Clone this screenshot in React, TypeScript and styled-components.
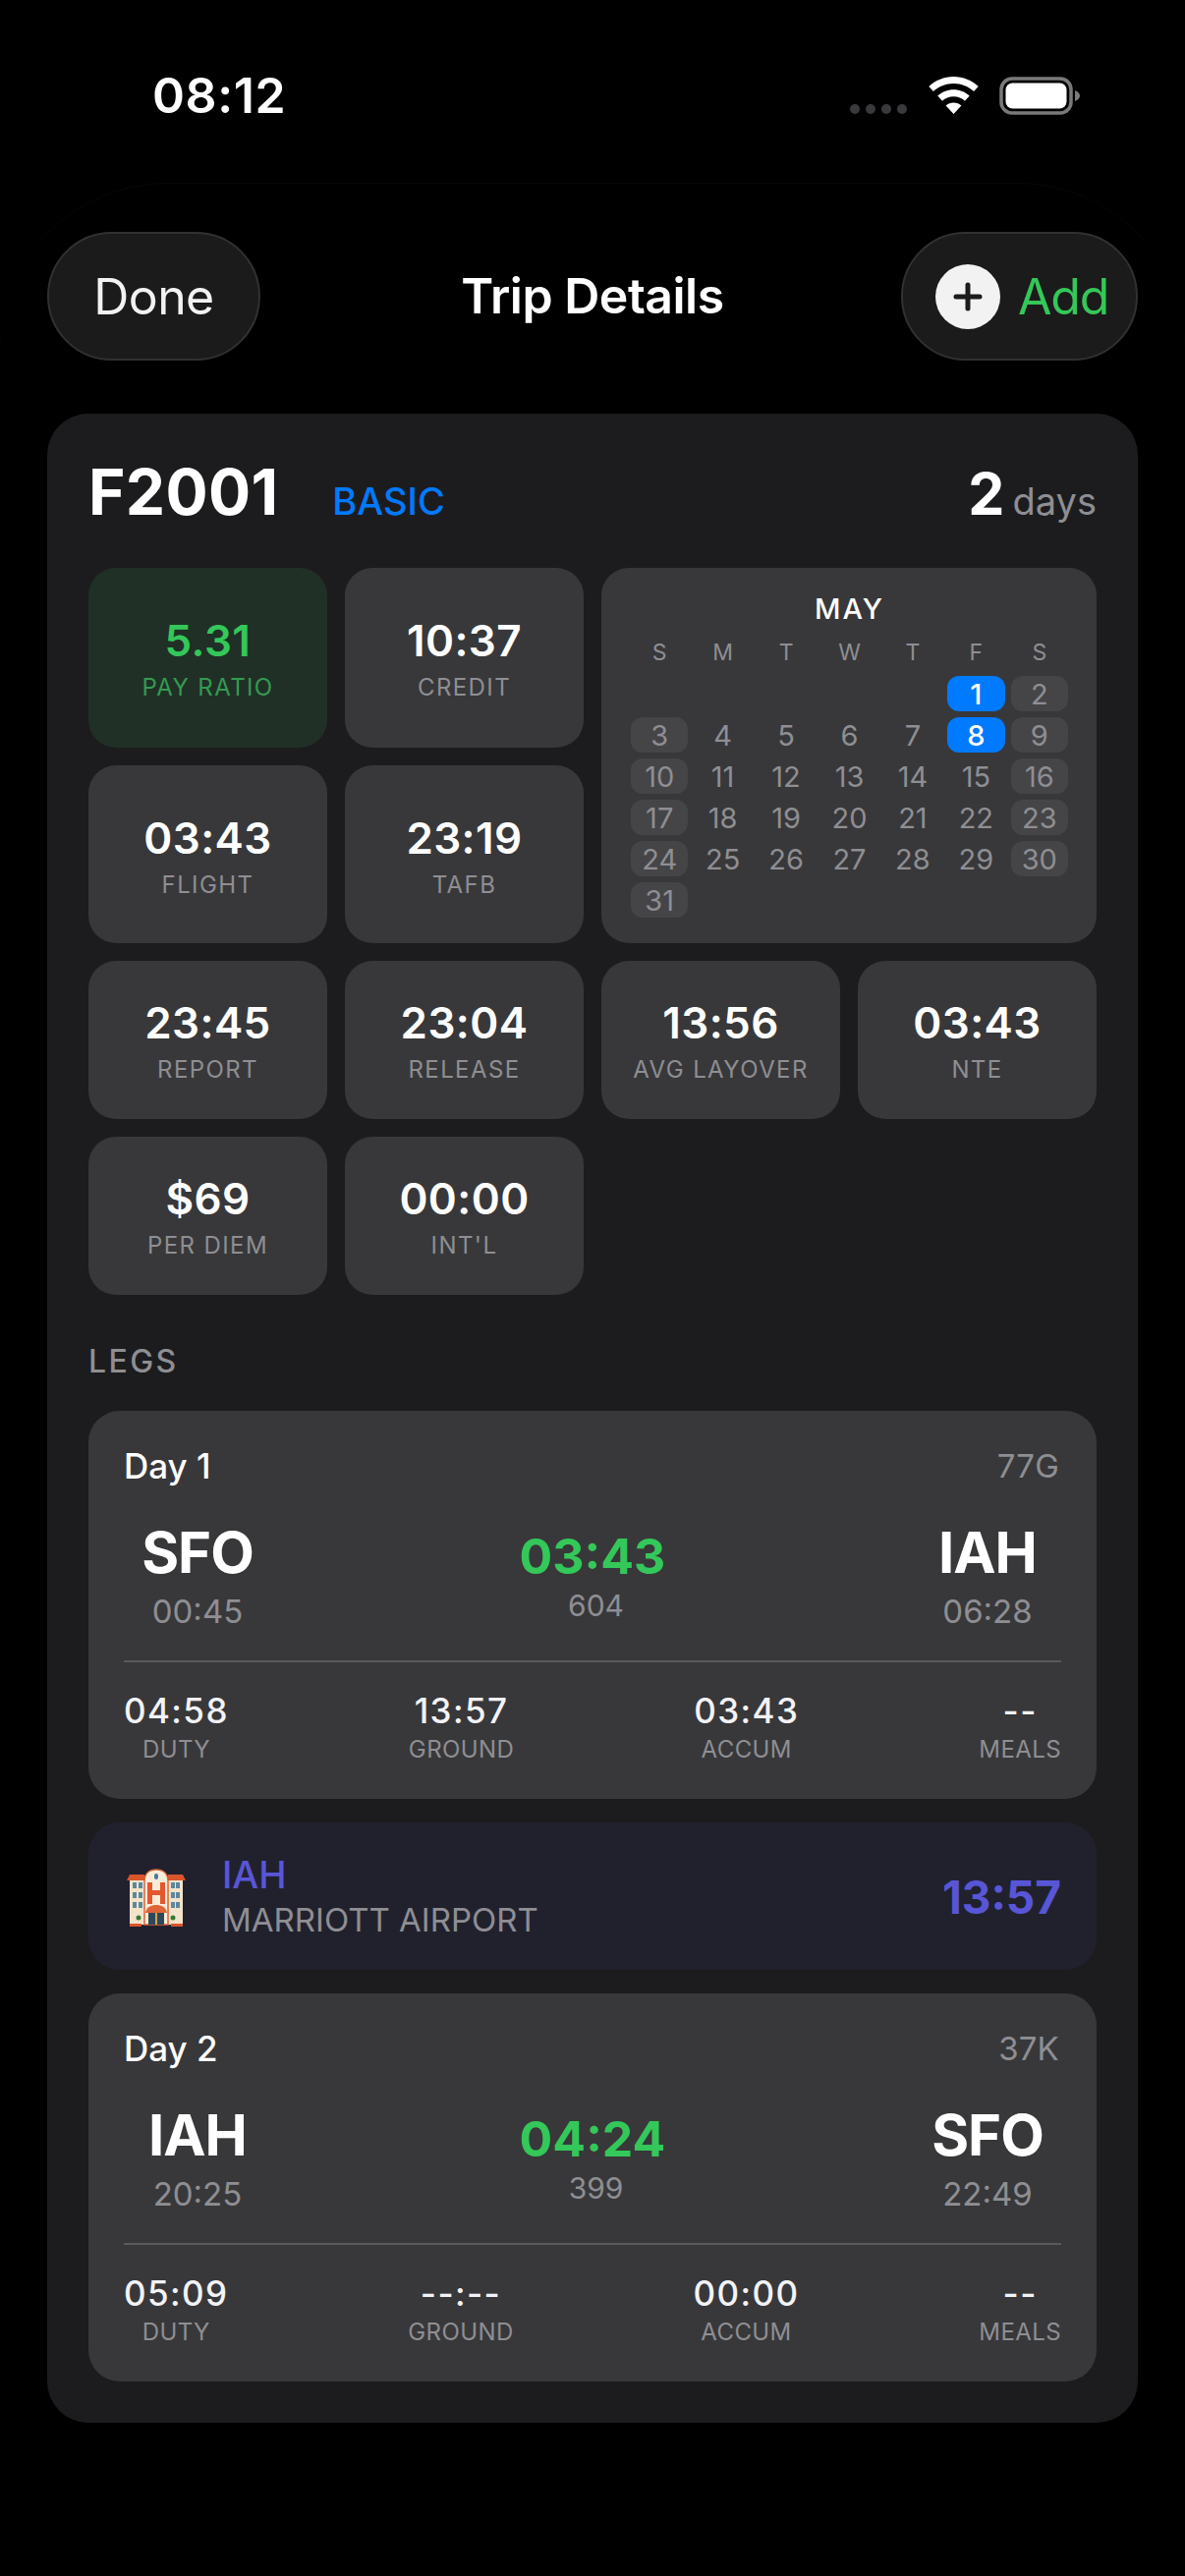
import React from "react";
import styled, { createGlobalStyle } from "styled-components";

const Global = createGlobalStyle`
  html, body { margin: 0; padding: 0; background: #000; }
  * { box-sizing: border-box; }
  body { font-family: Inter, "Liberation Sans", sans-serif; color: #fff; }
`;

const Screen = styled.div`
  width: 1206px;
  height: 2622px;
  overflow: hidden;
  background: #000;
`;

const StatusBar = styled.div`
  height: 186px;
  padding: 72px 106px 0 155px;
  display: flex;
  justify-content: space-between;
  align-items: flex-start;
`;

const Clock = styled.div`
  font-size: 50px;
  line-height: 50px;
  font-weight: 600;
  letter-spacing: 0.6px;
`;

const StatusIcons = styled.div`
  display: flex;
  align-items: flex-start;
  margin-top: 6px;
`;

const SignalDots = styled.div`
  display: flex;
  gap: 6px;
  margin: 28px 22px 0 0;
`;

const SignalDot = styled.span`
  width: 10px;
  height: 10px;
  border-radius: 5px;
  background: #3a3a3c;
`;

const Sheet = styled.div`
  height: 2436px;
  padding: 49px 48px 0;
  border-top: 1px solid #090909;
  border-radius: 170px 170px 0 0;
`;

const NavBar = styled.div`
  height: 131px;
  display: grid;
  grid-template-columns: 241px 1fr 241px;
  align-items: center;
`;

const NavPill = styled.div<{ $align: "start" | "end"; $width: number }>`
  width: ${(p) => p.$width}px;
  height: 131px;
  justify-self: ${(p) => p.$align};
  padding-left: ${(p) => (p.$align === "start" ? "0" : "33px")};
  display: flex;
  align-items: center;
  justify-content: ${(p) => (p.$align === "start" ? "center" : "flex-start")};
  gap: 18px;
  border-radius: 66px;
  background: #1b1b1b;
  border: 2px solid #313133;
  font-size: 50px;
  font-weight: 400;
  color: #f2f2f2;
  letter-spacing: -0.6px;
`;

const AddLabel = styled.span`
  color: #34c759;
  letter-spacing: -1.2px;
`;

const AddCircle = styled.span`
  width: 66px;
  height: 66px;
  border-radius: 50%;
  background: #f2f2f2;
  display: flex;
  align-items: center;
  justify-content: center;
`;

const NavTitle = styled.div`
  padding-bottom: 2px;
  text-align: center;
  font-size: 50px;
  font-weight: 600;
  letter-spacing: -0.5px;
`;

const TripCard = styled.div`
  margin-top: 54px;
  height: 2045px;
  padding: 0 42px;
  background: #1c1c1e;
  border-radius: 42px;
`;

const TripHeader = styled.div`
  height: 157px;
  padding-top: 44px;
  display: flex;
  align-items: baseline;
`;

const TripCode = styled.div`
  font-size: 64px;
  line-height: 72px;
  font-weight: 700;
  letter-spacing: 0.3px;
`;

const TripType = styled.div`
  margin-left: 55px;
  font-size: 38px;
  font-weight: 500;
  color: #007aff;
`;

const DayCount = styled.div`
  margin-left: auto;
  display: flex;
  align-items: baseline;
  gap: 8px;
`;

const DayNumber = styled.span`
  font-size: 59px;
  font-weight: 700;
`;

const DayUnit = styled.span`
  font-size: 38px;
  color: #8e8e93;
`;

const StatGrid = styled.div`
  display: grid;
  grid-template-columns: repeat(4, 243px);
  grid-template-rows: 183px 181px 161px 161px;
  column-gap: 18px;
  row-gap: 18px;
`;

const StatTile = styled.div<{ $green?: boolean; $top: number }>`
  padding-top: ${(p) => p.$top}px;
  display: flex;
  flex-direction: column;
  align-items: center;
  border-radius: 28px;
  background: ${(p) => (p.$green ? "#203026" : "#38383a")};
`;

const StatValue = styled.div<{ $green?: boolean }>`
  font-size: 44px;
  line-height: 52px;
  font-weight: 600;
  letter-spacing: 0.4px;
  color: ${(p) => (p.$green ? "#34c759" : "#fff")};
`;

const StatLabel = styled.div<{ $green?: boolean }>`
  margin-top: 7px;
  font-size: 24px;
  line-height: 30px;
  letter-spacing: 1.4px;
  white-space: nowrap;
  color: ${(p) => (p.$green ? "#349a50" : "#8e8e93")};
`;

const Calendar = styled.div`
  grid-column: 3 / 5;
  grid-row: 1 / 3;
  padding: 24px 29px 0 30px;
  border-radius: 28px;
  background: #38383a;
`;

const CalendarMonth = styled.div`
  text-align: center;
  font-size: 29px;
  line-height: 36px;
  font-weight: 500;
  letter-spacing: 2px;
`;

const CalendarGrid = styled.div`
  margin-top: 8px;
  display: grid;
  grid-template-columns: repeat(7, 1fr);
  grid-auto-rows: 36px;
  column-gap: 6px;
  row-gap: 6px;
`;

const WeekDay = styled.div`
  height: 36px;
  margin-bottom: 11px;
  display: flex;
  align-items: center;
  justify-content: center;
  font-size: 23px;
  color: #8e8e93;
`;

const DayCell = styled.div<{ $kind: "plain" | "off" | "trip"; $start?: number }>`
  ${(p) => (p.$start ? `grid-column-start: ${p.$start};` : "")}
  display: flex;
  align-items: center;
  justify-content: center;
  border-radius: 12px;
  font-size: 29px;
  font-weight: ${(p) => (p.$kind === "trip" ? 500 : 400)};
  color: ${(p) => (p.$kind === "trip" ? "#fff" : "#8e8e93")};
  background: ${(p) =>
    p.$kind === "trip" ? "#007aff" : p.$kind === "off" ? "#454547" : "transparent"};
`;

const SectionTitle = styled.div`
  height: 118px;
  padding-top: 50px;
  font-size: 32px;
  line-height: 36px;
  font-weight: 500;
  letter-spacing: 2.4px;
  color: #8e8e93;
`;

const LegList = styled.div`
  display: flex;
  flex-direction: column;
  gap: 24px;
`;

const LegCard = styled.div`
  height: 395px;
  padding: 33px 36px 0;
  border-radius: 32px;
  background: #38383a;
`;

const LegTop = styled.div`
  display: flex;
  justify-content: space-between;
  align-items: center;
  height: 46px;
`;

const LegDay = styled.div`
  font-size: 35px;
  font-weight: 500;
`;

const LegAircraft = styled.div`
  margin-right: 2px;
  font-size: 33px;
  letter-spacing: 0.2px;
  color: #8e8e93;
`;

const Route = styled.div`
  height: 177px;
  padding-top: 33px;
  display: grid;
  grid-template-columns: 150px 1fr 150px;
  border-bottom: 2px solid #5a5a5c;
`;

const RouteEnd = styled.div`
  display: flex;
  flex-direction: column;
  align-items: center;
`;

const Airport = styled.div`
  font-size: 58px;
  line-height: 64px;
  font-weight: 700;
  letter-spacing: -1px;
`;

const RouteTime = styled.div`
  margin-top: 8px;
  font-size: 33px;
  line-height: 40px;
  color: #8e8e93;
`;

const RouteMiddle = styled.div`
  display: flex;
  flex-direction: column;
  align-items: center;
  padding-top: 7px;
`;

const FlightTime = styled.div`
  font-size: 50px;
  line-height: 58px;
  font-weight: 700;
  color: #34c759;
`;

const FlightNumber = styled.div`
  margin-top: 3px;
  margin-left: 7px;
  font-size: 30px;
  line-height: 36px;
  color: #8e8e93;
`;

const LegStats = styled.div`
  padding-top: 28px;
  display: flex;
  justify-content: space-between;
`;

const LegStat = styled.div`
  display: flex;
  flex-direction: column;
  align-items: center;
`;

const LegStatValue = styled.div`
  font-size: 35px;
  line-height: 42px;
  font-weight: 500;
  letter-spacing: 1.4px;
  color: #f2f2f7;
`;

const LegStatLabel = styled.div`
  margin-top: 4px;
  font-size: 24px;
  line-height: 30px;
  letter-spacing: 0.4px;
  color: #8e8e93;
`;

const HotelRow = styled.div`
  height: 150px;
  padding: 2px 36px 0 39px;
  display: flex;
  align-items: center;
  border-radius: 32px;
  background: #21212e;
`;

const HotelText = styled.div`
  margin-left: 37px;
  flex: 1;
`;

const HotelCode = styled.div`
  font-size: 38px;
  line-height: 44px;
  font-weight: 500;
  color: #5856d6;
`;

const HotelName = styled.div`
  margin-top: 2px;
  font-size: 33px;
  line-height: 44px;
  color: #8e8e93;
`;

const HotelTime = styled.div`
  font-size: 46px;
  font-weight: 700;
  color: #5856d6;
`;

const BatterySvg = styled.svg`
  margin-left: 21px;
`;

const WifiIcon = () => (
  <svg width="51" height="38" viewBox="0 0 51 38">
    <path fill="#fff" d="M25.5 0C15.8 0 7 3.8.3 10l4.6 5.1c5.4-5 12.7-8 20.6-8s15.2 3 20.6 8l4.6-5.1C44 3.8 35.2 0 25.5 0z" />
    <path fill="#fff" d="M25.5 13.2c-6.2 0-11.9 2.4-16.2 6.3l4.7 5.2c3-2.7 7-4.4 11.5-4.4s8.5 1.7 11.5 4.4l4.7-5.2c-4.3-3.9-10-6.3-16.2-6.3z" />
    <path fill="#fff" d="M25.5 26.4c-3 0-5.8 1.1-7.9 3L25.5 38l7.9-8.6c-2.1-1.9-4.9-3-7.9-3z" />
  </svg>
);

const BatteryIcon = () => (
  <BatterySvg width="83" height="40" viewBox="0 0 83 40">
    <rect x="2" y="2" width="71" height="35" rx="11" fill="none" stroke="#7a7a7a" strokeWidth="3.5" />
    <rect x="6.5" y="6.5" width="62" height="26" rx="7" fill="#fff" />
    <path d="M77 14c3 1 5 3 5 5.5S80 24 77 25z" fill="#7a7a7a" />
  </BatterySvg>
);

const PlusIcon = () => (
  <svg width="30" height="30" viewBox="0 0 30 30">
    <path d="M15 3v24M3 15h24" stroke="#1c1c1e" strokeWidth="5" strokeLinecap="round" />
  </svg>
);

const HotelIcon = () => (
  <svg width="60" height="60" viewBox="0 0 60 60">
    <rect x="3" y="12" width="54" height="46" fill="#f3e3cb" />
    <path d="M18 14c0-8 5-12 12-12s12 4 12 12v44H18z" fill="#f8ecd8" stroke="#d9663a" strokeWidth="1.5" />
    <path d="M0 13 3 7h15v6zM60 13l-3-6H42v6z" fill="#d9552c" />
    <rect x="28" y="6" width="4" height="6" rx="2" fill="#4e7a94" />
    <path d="M21 15h5v8h8v-8h5v22h-5v-9h-8v9h-5z" fill="#e4572e" />
    {[6, 12, 45, 50].map((x) =>
      [15, 25, 35].map((y) => <rect key={`${x}-${y}`} x={x} y={y} width="4" height="6" fill="#5d87a1" />)
    )}
    <path d="M19 46c1-6 6-8 11-8s10 2 11 8z" fill="#e0643a" />
    <rect x="22" y="46" width="16" height="12" fill="#2f4858" />
    <rect x="29" y="46" width="2" height="12" fill="#c9a45a" />
    <circle cx="12" cy="51" r="2.5" fill="#2e7d32" />
    <circle cx="47" cy="51" r="2.5" fill="#2e7d32" />
    <path d="M3 57h12v3H3zM45 57h12v3H45z" fill="#d9552c" />
  </svg>
);

const topStats = [
  { value: "5.31", label: "PAY RATIO", green: true },
  { value: "10:37", label: "CREDIT" },
  { value: "03:43", label: "FLIGHT" },
  { value: "23:19", label: "TAFB" },
];
const bottomStats = [
  { value: "23:45", label: "REPORT" },
  { value: "23:04", label: "RELEASE" },
  { value: "13:56", label: "AVG LAYOVER" },
  { value: "03:43", label: "NTE" },
  { value: "$69", label: "PER DIEM" },
  { value: "00:00", label: "INT'L" },
];

const weekDays = ["S", "M", "T", "W", "T", "F", "S"];
const monthDays = Array.from({ length: 31 }, (_, i) => i + 1);
const dayKind = (d: number): "plain" | "off" | "trip" => {
  if (d === 1 || d === 8) return "trip";
  const col = (d + 4) % 7;
  return col === 0 || col === 6 ? "off" : "plain";
};

const legs = [
  {
    day: "Day 1",
    aircraft: "77G",
    from: "SFO",
    dep: "00:45",
    flight: "03:43",
    number: "604",
    to: "IAH",
    arr: "06:28",
    stats: ["04:58", "13:57", "03:43", "--"],
  },
  {
    day: "Day 2",
    aircraft: "37K",
    from: "IAH",
    dep: "20:25",
    flight: "04:24",
    number: "399",
    to: "SFO",
    arr: "22:49",
    stats: ["05:09", "--:--", "00:00", "--"],
  },
];
const legLabels = ["DUTY", "GROUND", "ACCUM", "MEALS"];

const Leg = ({ leg }: { leg: (typeof legs)[number] }) => (
  <LegCard>
    <LegTop>
      <LegDay>{leg.day}</LegDay>
      <LegAircraft>{leg.aircraft}</LegAircraft>
    </LegTop>
    <Route>
      <RouteEnd>
        <Airport>{leg.from}</Airport>
        <RouteTime>{leg.dep}</RouteTime>
      </RouteEnd>
      <RouteMiddle>
        <FlightTime>{leg.flight}</FlightTime>
        <FlightNumber>{leg.number}</FlightNumber>
      </RouteMiddle>
      <RouteEnd>
        <Airport>{leg.to}</Airport>
        <RouteTime>{leg.arr}</RouteTime>
      </RouteEnd>
    </Route>
    <LegStats>
      {leg.stats.map((v, i) => (
        <LegStat key={legLabels[i]}>
          <LegStatValue>{v}</LegStatValue>
          <LegStatLabel>{legLabels[i]}</LegStatLabel>
        </LegStat>
      ))}
    </LegStats>
  </LegCard>
);

export default function App() {
  return (
    <Screen>
      <Global />
      <StatusBar>
        <Clock>08:12</Clock>
        <StatusIcons>
          <SignalDots>
            <SignalDot />
            <SignalDot />
            <SignalDot />
            <SignalDot />
          </SignalDots>
          <WifiIcon />
          <BatteryIcon />
        </StatusIcons>
      </StatusBar>
      <Sheet>
        <NavBar>
          <NavPill $align="start" $width={217}>Done</NavPill>
          <NavTitle>Trip Details</NavTitle>
          <NavPill $align="end" $width={241}>
            <AddCircle>
              <PlusIcon />
            </AddCircle>
            <AddLabel>Add</AddLabel>
          </NavPill>
        </NavBar>
        <TripCard>
          <TripHeader>
            <TripCode>F2001</TripCode>
            <TripType>BASIC</TripType>
            <DayCount>
              <DayNumber>2</DayNumber>
              <DayUnit>days</DayUnit>
            </DayCount>
          </TripHeader>
          <StatGrid>
            {topStats.slice(0, 2).map((s) => (
              <StatTile key={s.label} $green={s.green} $top={48}>
                <StatValue $green={s.green}>{s.value}</StatValue>
                <StatLabel $green={s.green}>{s.label}</StatLabel>
              </StatTile>
            ))}
            <Calendar>
              <CalendarMonth>MAY</CalendarMonth>
              <CalendarGrid>
                {weekDays.map((d, i) => (
                  <WeekDay key={i}>{d}</WeekDay>
                ))}
                {monthDays.map((d) => (
                  <DayCell key={d} $kind={dayKind(d)} $start={d === 1 ? 6 : undefined}>
                    {d}
                  </DayCell>
                ))}
              </CalendarGrid>
            </Calendar>
            {topStats.slice(2).map((s) => (
              <StatTile key={s.label} $top={48}>
                <StatValue>{s.value}</StatValue>
                <StatLabel>{s.label}</StatLabel>
              </StatTile>
            ))}
            {bottomStats.map((s) => (
              <StatTile key={s.label} $top={37}>
                <StatValue>{s.value}</StatValue>
                <StatLabel>{s.label}</StatLabel>
              </StatTile>
            ))}
          </StatGrid>
          <SectionTitle>LEGS</SectionTitle>
          <LegList>
            <Leg leg={legs[0]} />
            <HotelRow>
              <HotelIcon />
              <HotelText>
                <HotelCode>IAH</HotelCode>
                <HotelName>MARRIOTT AIRPORT</HotelName>
              </HotelText>
              <HotelTime>13:57</HotelTime>
            </HotelRow>
            <Leg leg={legs[1]} />
          </LegList>
        </TripCard>
      </Sheet>
    </Screen>
  );
}
